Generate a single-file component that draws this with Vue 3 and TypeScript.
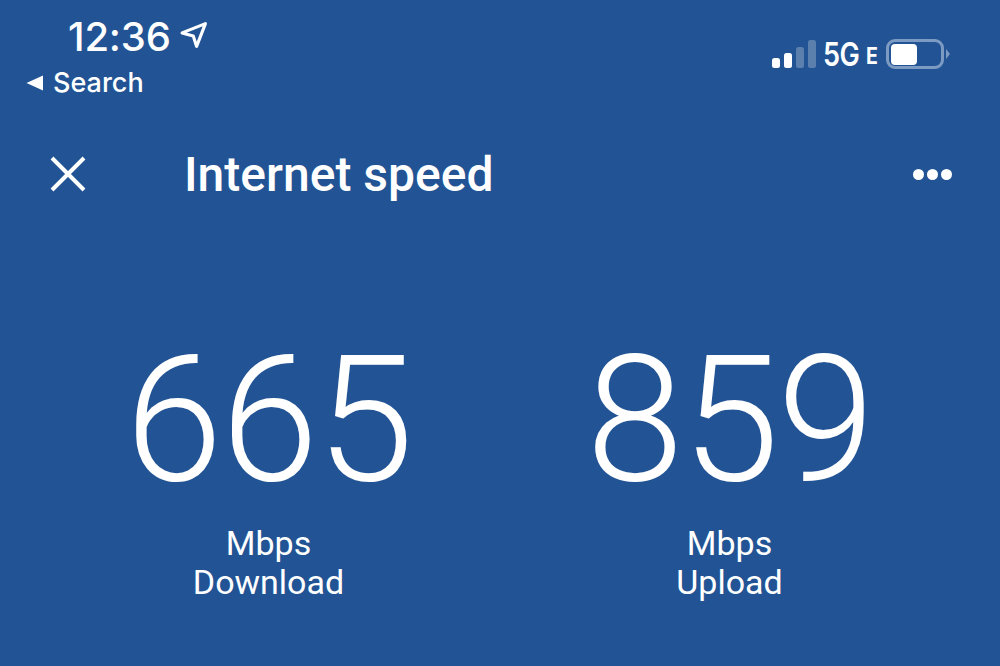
<script setup lang="ts">
interface Stat { value: string; label: string }
const stats: Stat[] = [
  { value: '665', label: 'Download' },
  { value: '859', label: 'Upload' },
]
</script>

<template>
  <main class="screen">
    <div class="status">
      <div class="status-left">
        <div class="time-row">
          <span class="time">12:36</span>
          <svg class="loc" width="28" height="28" viewBox="0 0 27 27" fill="none">
            <path d="M2 11.5 L24.5 2.5 L16 24.5 L12.8 14.5 Z" stroke="#fff" stroke-width="3" stroke-linejoin="round" />
          </svg>
        </div>
        <div class="back">
          <svg width="18" height="16" viewBox="0 0 18 16"><path d="M0.5 8 L17 0.5 V15.5 Z" fill="#fff" /></svg>
          <span>Search</span>
        </div>
      </div>
      <div class="status-right">
        <div class="signal">
          <i class="b1"></i><i class="b2"></i><i class="b3"></i><i class="b4"></i>
        </div>
        <span class="net">5G</span><span class="e">E</span>
        <div class="battery"><div class="level"></div></div>
        <div class="nub"></div>
      </div>
    </div>

    <header class="bar">
      <svg class="close" width="36" height="36" viewBox="0 0 36 36">
        <path d="M2 2 L34 34 M34 2 L2 34" stroke="#fff" stroke-width="4" />
      </svg>
      <h1>Internet speed</h1>
      <div class="more"><i></i><i></i><i></i></div>
    </header>

    <section class="stats">
      <div v-for="s in stats" :key="s.label" class="stat">
        <div class="value">{{ s.value }}</div>
        <div class="unit">Mbps</div>
        <div class="unit">{{ s.label }}</div>
      </div>
    </section>
  </main>
</template>

<style>
html, body { margin: 0; background: #225495; }
</style>

<style scoped>
.screen {
  width: 1000px;
  height: 666px;
  overflow: hidden;
  background: #225495;
  color: #fff;
  font-family: Roboto, sans-serif;
  display: flex;
  flex-direction: column;
}
.status {
  display: flex;
  justify-content: space-between;
  align-items: flex-start;
  height: 100px;
  padding: 14px 50px 0 26px;
}
.time-row { display: flex; align-items: center; gap: 9px; padding-left: 42px; height: 46px; }
.time { font: 500 40px/46px Inter, sans-serif; letter-spacing: -0.2px; }
.loc { margin-top: -4px; }
.back { display: flex; align-items: center; gap: 9px; height: 46px; font: 500 27px/46px Inter, sans-serif; }
.status-right { display: flex; align-items: center; height: 40px; margin-top: 20px; }
.signal { display: flex; align-items: flex-end; gap: 4px; height: 28px; margin-left: -1px; }
.signal i { display: block; width: 8px; border-radius: 2.5px; background: #fff; }
.signal .b1 { height: 10px; }
.signal .b2 { height: 15px; }
.signal .b3 { height: 21px; background: #5b80ae; }
.signal .b4 { height: 28px; background: #5b80ae; }
.net { margin-left: 7px; font: 600 33px/40px Inter, sans-serif; letter-spacing: -0.5px; transform: scaleX(0.82); transform-origin: left; width: 39px; }
.e { font: 700 23px/40px Inter, sans-serif; margin: 4px 0 0 3px; transform: scaleX(0.85); width: 14px; }
.battery { margin-left: 7px; width: 58px; height: 30px; box-sizing: border-box; border: 3px solid #7d9bc2; border-radius: 9px; padding: 1.5px; }
.level { width: 26px; height: 21px; background: #fff; border-radius: 4px; }
.nub { width: 0; height: 0; margin-left: 2px; border-left: 4px solid #7d9bc2; border-top: 5px solid transparent; border-bottom: 5px solid transparent; }

.bar { display: flex; align-items: center; height: 148px; margin-top: -14px; padding: 0 48px 0 50px; }
.close { flex: none; }
h1 { margin: 2px 0 0 98px; flex: 1; font: 500 48px/60px Roboto, sans-serif; }
.more { display: flex; gap: 3px; }
.more i { display: block; width: 11px; height: 11px; border-radius: 50%; background: #fff; }

.stats { display: grid; grid-template-columns: 461px 461px; padding-left: 38px; margin-top: 69px; }
.stat { display: flex; flex-direction: column; align-items: center; }
.value { font: 300 176px/207px Roboto, sans-serif; letter-spacing: -2px; }
.unit { font: 400 34px/39px Roboto, sans-serif; }
</style>
